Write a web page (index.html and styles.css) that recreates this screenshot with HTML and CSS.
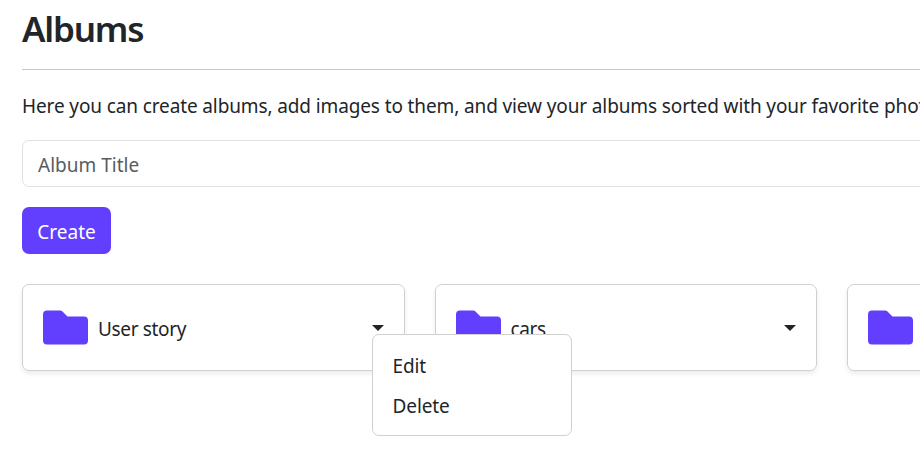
FILE: index.html
```html
<!DOCTYPE html>
<html lang="en">
<head>
<meta charset="utf-8">
<title>Albums</title>
<link rel="stylesheet" href="styles.css">
</head>
<body>
<main class="page">
  <h1 class="title">Albums</h1>
  <p class="intro">Here you can create albums, add images to them, and view your albums sorted with your favorite photos.</p>
  <form class="create">
    <input class="field" type="text" placeholder="Album Title">
    <button class="button" type="button">Create</button>
  </form>
  <section class="albums">
    <article class="card">
      <svg class="folder" viewBox="0 0 45 34"><path d="M4 0H17Q18.500 0 19.500 1L24.500 6H41Q45 6 45 10V30Q45 34 41 34H4Q0 34 0 30V4Q0 0 4 0Z"/></svg>
      <span class="name">User story</span>
      <div class="dropdown"><span class="caret"></span>
        <div class="menu"><a class="item">Edit</a><a class="item">Delete</a></div>
      </div>
    </article>
    <article class="card">
      <svg class="folder" viewBox="0 0 45 34"><path d="M4 0H17Q18.500 0 19.500 1L24.500 6H41Q45 6 45 10V30Q45 34 41 34H4Q0 34 0 30V4Q0 0 4 0Z"/></svg>
      <span class="name">cars</span>
      <div class="dropdown"><span class="caret"></span></div>
    </article>
    <article class="card">
      <svg class="folder" viewBox="0 0 45 34"><path d="M4 0H17Q18.500 0 19.500 1L24.500 6H41Q45 6 45 10V30Q45 34 41 34H4Q0 34 0 30V4Q0 0 4 0Z"/></svg>
    </article>
  </section>
</main>
</body>
</html>
```
FILE: styles.css
```css
* { box-sizing: border-box; }
body { margin: 0; height: 468px; overflow: hidden; background: #fff; color: #212529; font: 19px/30px "Noto Sans", sans-serif; }
.page { width: 1229.5px; padding: 8px 0 0 22px; }
.title { margin: 0; height: 62px; border-bottom: 1px solid #c8c9ca; font-size: 35px; line-height: 42px; font-weight: 600; letter-spacing: -1.2px; }
.intro { margin: 21px 0 19px; height: 30px; white-space: nowrap; letter-spacing: -.12px; }
.create { display: flex; flex-direction: column; align-items: flex-start; gap: 20px; }
.field { width: 100%; height: 47px; padding: 2px 15px 0; border: 1px solid #dee2e6; border-radius: 7px; font: inherit; }
.field::placeholder { color: #595c5f; opacity: 1; }
.button { height: 47px; width: 89px; padding: 2px 0 0; border: 0; border-radius: 7px; background: #623fff; color: #fff; font: inherit; }
.albums { display: grid; grid-template-columns: repeat(3, 1fr); gap: 30px; margin-top: 30px; }
.card { display: flex; align-items: center; height: 87px; padding: 0 20px; border: 1px solid #d0d0d1; border-radius: 7px; box-shadow: 0 2.5px 5px rgba(0,0,0,.075); }
.folder { width: 45px; height: 35px; fill: #623fff; }
.name { flex: 1; margin-left: 10px; padding-top: 2px; letter-spacing: -.35px; }
.dropdown { position: relative; width: 12px; height: 6px; }
.caret { display: block; border: 6px solid transparent; border-top-color: #212529; border-bottom: 0; }
.menu { position: absolute; z-index: 1; left: 0; top: 9px; width: 200px; height: 102px; padding: 11px 0; border: 1px solid #d0d0d1; border-radius: 7px; background: #fff; }
.item { display: block; height: 40px; padding: 5px 20px; letter-spacing: -.1px; }
```
